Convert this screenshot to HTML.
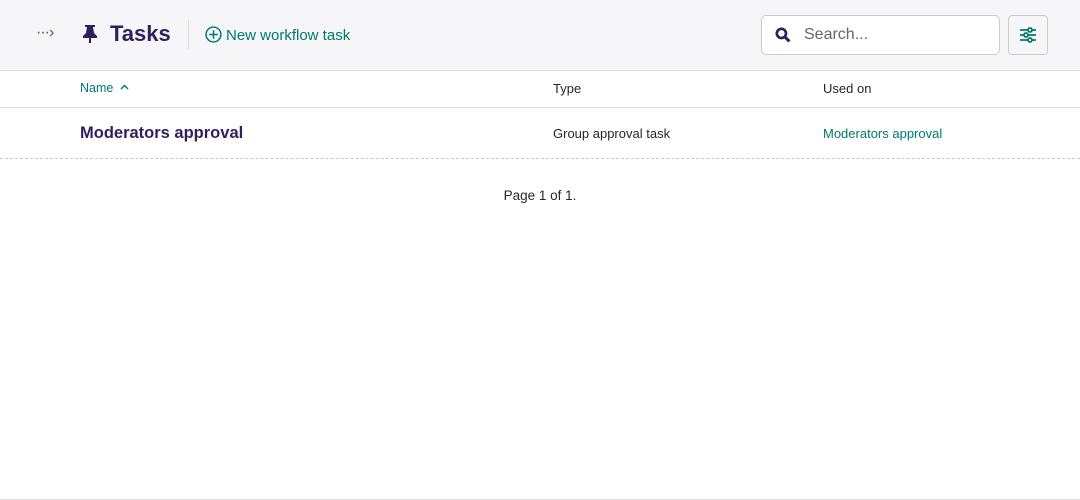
<!DOCTYPE html>
<html><head><style>
*{margin:0;padding:0;box-sizing:border-box}
body{width:1080px;height:500px;background:#fff;font-family:"Liberation Sans",sans-serif;position:relative;overflow:hidden;color:#262626}
.hdr{position:absolute;left:0;top:0;width:1080px;height:71px;background:#f6f6f8;border-bottom:1px solid #e0e0e0}
.abs{position:absolute}
</style></head><body>
<div class="hdr">
 <div class="abs" style="left:36px;top:24px;font-size:16px;color:#555;letter-spacing:-1px">···›</div>
 <svg class="abs" style="left:82px;top:24px" width="16" height="20" viewBox="0 0 16 20"><path d="M3 1h10v2h-2l1 6 3 3v2H9v5H7v-5H1v-2l3-3 1-6H3z" fill="#2e1f5e"/></svg>
 <div class="abs" style="left:110px;top:21px;font-size:22px;font-weight:bold;color:#2e1f5e">Tasks</div>
 <div class="abs" style="left:188px;top:20px;width:1px;height:29px;background:#ddd"></div>
 <svg class="abs" style="left:205px;top:26px" width="17" height="17" viewBox="0 0 16 16"><circle cx="8" cy="8" r="7" fill="none" stroke="#00796b" stroke-width="1.4"/><path d="M8 4v8M4 8h8" stroke="#00796b" stroke-width="1.4"/></svg>
 <div class="abs" style="left:226px;top:27px;font-size:15px;color:#00796b">New workflow task</div>
 <div class="abs" style="left:761px;top:15px;width:239px;height:40px;background:#fff;border:1px solid #ccc;border-radius:5px"></div>
 <svg class="abs" style="left:775px;top:27px" width="16" height="16" viewBox="0 0 15 15"><circle cx="6" cy="6" r="4.3" fill="none" stroke="#2e1f5e" stroke-width="2.5"/><path d="M9 9l4.5 4.5" stroke="#2e1f5e" stroke-width="2.8"/></svg>
 <div class="abs" style="left:804px;top:26px;font-size:16px;color:#666">Search...</div>
 <div class="abs" style="left:1008px;top:15px;width:40px;height:40px;border:1px solid #ccc;border-radius:4px;background:#f6f6f8"></div>
 <svg class="abs" style="left:1018px;top:25px" width="20" height="20" viewBox="0 0 20 20" fill="none" stroke="#00796b" stroke-width="1.8"><path d="M2 5h16M2 10h16M2 15h16"/><circle cx="12" cy="5" r="2" fill="#f6f6f8"/><circle cx="8" cy="10" r="2" fill="#f6f6f8"/><circle cx="12" cy="15" r="2" fill="#f6f6f8"/></svg>
</div>
<div class="abs" style="left:80px;top:81px;font-size:12.5px;color:#00796b">Name</div>
<svg class="abs" style="left:120px;top:84px" width="9" height="6" viewBox="0 0 9 6"><path d="M1 5l3.5-3.5L8 5" fill="none" stroke="#00796b" stroke-width="1.4"/></svg>
<div class="abs" style="left:553px;top:81px;font-size:13px">Type</div>
<div class="abs" style="left:823px;top:81px;font-size:13px">Used on</div>
<div class="abs" style="left:0;top:107px;width:1080px;height:1px;background:#e0e0e0"></div>
<div class="abs" style="left:80px;top:124px;font-size:16.5px;font-weight:bold;color:#2e1f5e">Moderators approval</div>
<div class="abs" style="left:553px;top:126px;font-size:13px">Group approval task</div>
<div class="abs" style="left:823px;top:126px;font-size:13px;color:#00796b">Moderators approval</div>
<div class="abs" style="left:0;top:158px;width:1080px;border-top:1px dashed #c8c8c8"></div>
<div class="abs" style="left:0;top:188px;width:1080px;text-align:center;font-size:13.5px">Page 1 of 1.</div>
<div class="abs" style="left:0;top:499px;width:1080px;height:1px;background:#e0e0e0"></div>
</body></html>
